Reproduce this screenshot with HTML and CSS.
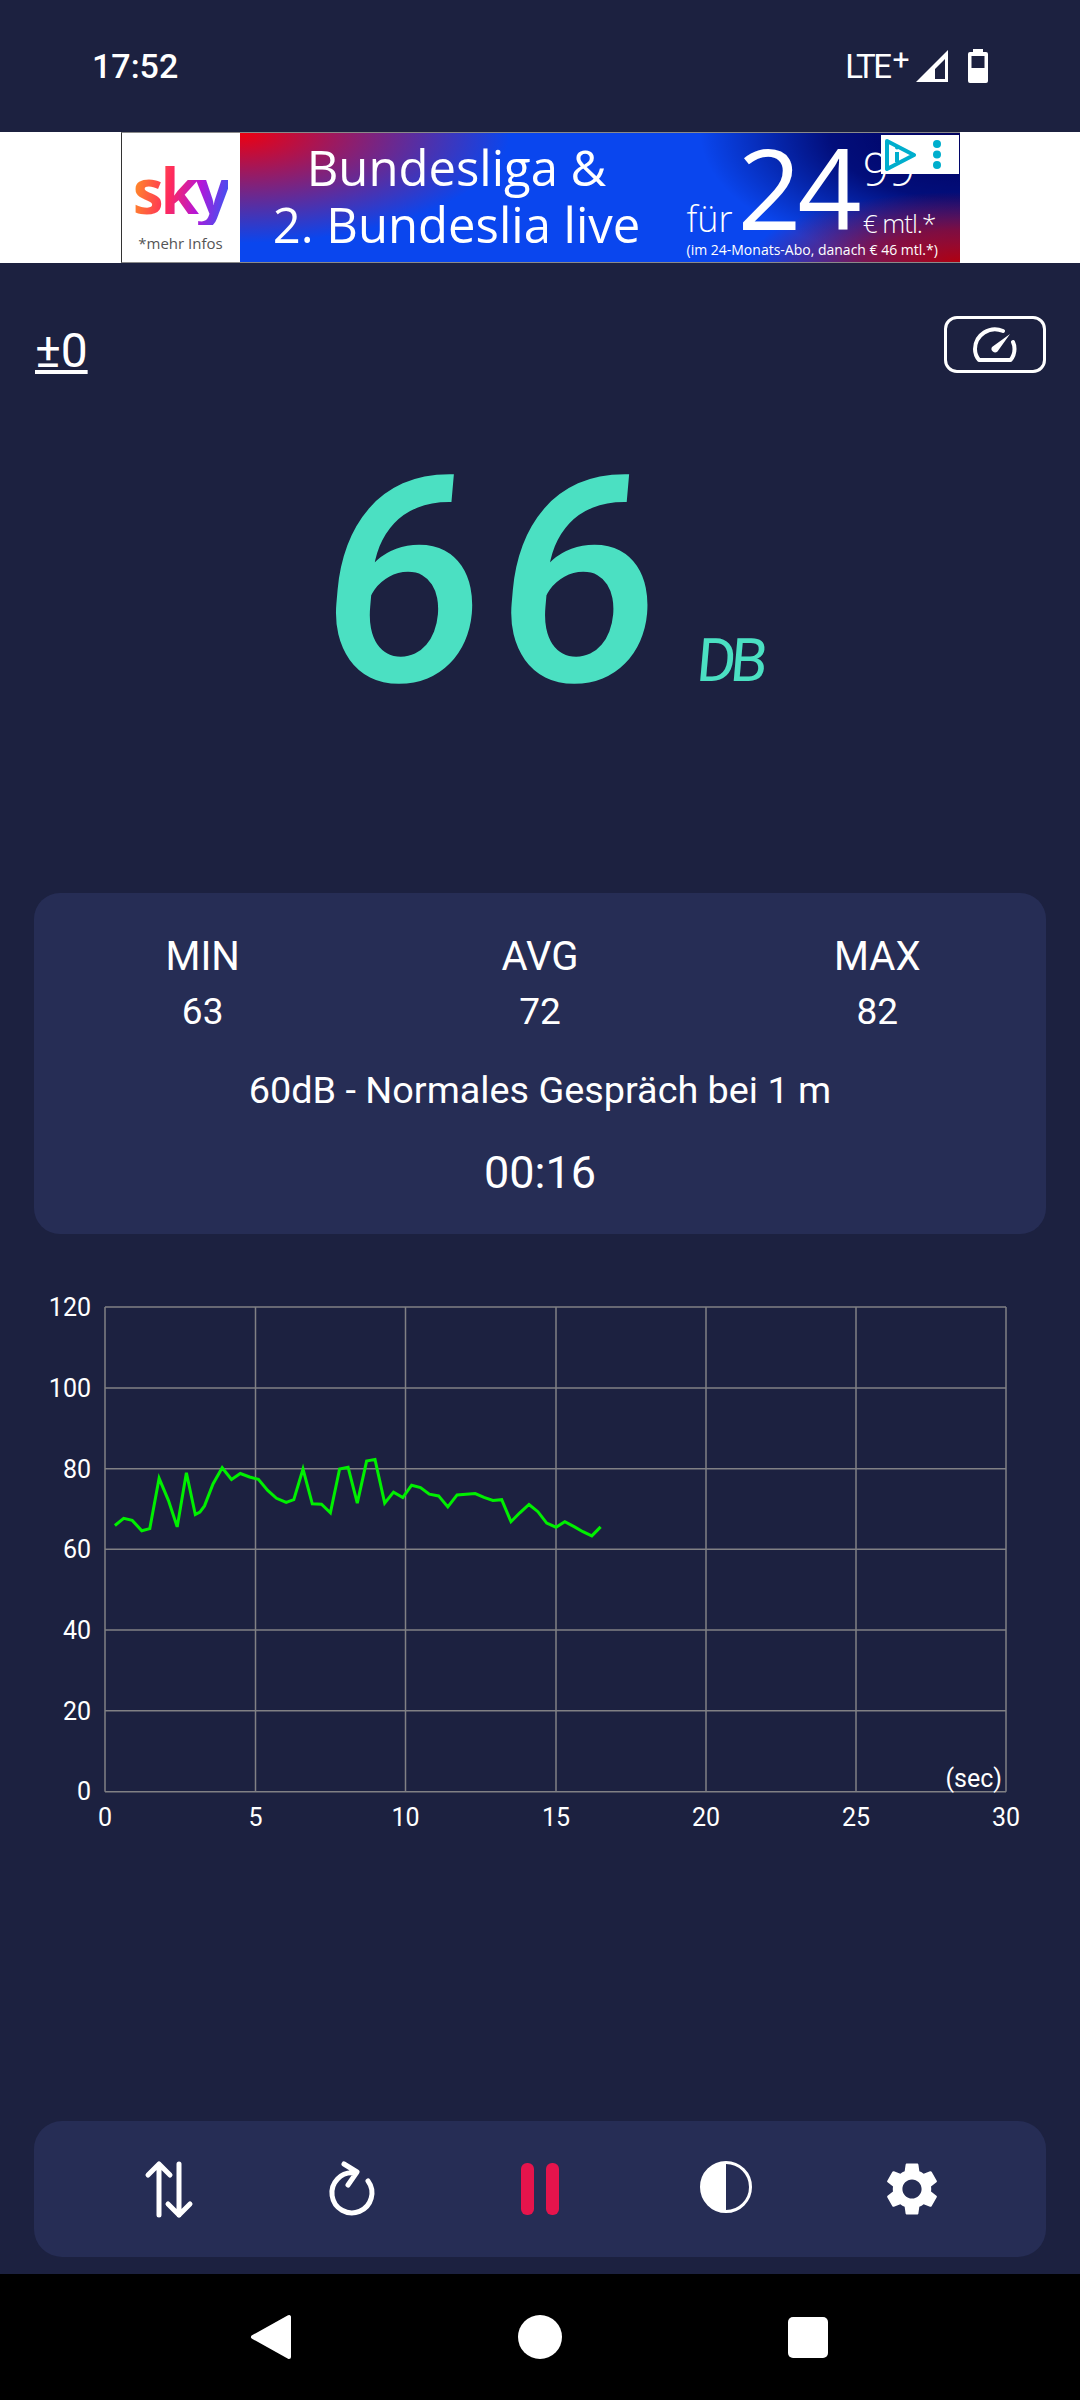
FILE: index.html
```html
<!DOCTYPE html>
<html lang="de">
<head>
    <meta charset="UTF-8">
    <meta name="viewport" content="width=device-width, initial-scale=1.0">
    <title>Sound Meter</title>
    <link rel="stylesheet" href="styles.css">
</head>
<body>
    <header class="status-bar">
        <span class="status-time">17:52</span>
        <div class="status-icons">
            <span class="status-net">LTE<span class="status-plus">+</span></span>
            <svg class="status-signal" width="32" height="32" viewBox="0 0 32 32">
                <path fill-rule="evenodd" fill="#fff" d="M0 32 32 0V32ZM19 29H29V9L19 19Z"/>
            </svg>
            <svg class="status-battery" width="20" height="34" viewBox="0 0 20 34">
                <path fill="#fff" d="M5 0H15V3H18Q20 3 20 5V32Q20 34 18 34H2Q0 34 0 32V5Q0 3 2 3H5Z"/>
                <rect fill="#1c2140" x="3.5" y="7" width="13" height="12"/>
            </svg>
        </div>
    </header>

    <section class="ad-band">
        <div class="ad-creative">
            <div class="ad-logo">
                <span class="ad-sky">sky</span>
                <span class="ad-more">*mehr Infos</span>
            </div>
            <div class="ad-main">
                <div class="ad-headline">
                    <span>Bundesliga &amp;</span>
                    <span>2. Bundeslia live</span>
                </div>
                <div class="ad-offer">
                    <div class="ad-price">
                        <span class="ad-fuer">für</span>
                        <span class="ad-euro">24</span>
                        <div class="ad-side">
                            <span class="ad-cent">99</span>
                            <span class="ad-mtl">€ mtl.*</span>
                        </div>
                    </div>
                    <span class="ad-small">(im 24-Monats-Abo, danach € 46 mtl.*)</span>
                </div>
            </div>
            <div class="ad-choices">
                <svg width="34" height="32" viewBox="0 0 34 32">
                    <path fill="none" stroke="#00aecd" stroke-width="4" stroke-linejoin="round" d="M3 2 30 16 3 30Z"/>
                    <path fill="none" stroke="#00aecd" stroke-width="4" d="M13 13V23"/>
                    <circle fill="#00aecd" cx="13" cy="8.5" r="2"/>
                </svg>
                <svg width="10" height="32" viewBox="0 0 10 32">
                    <circle fill="#00aecd" cx="5" cy="5" r="4"/>
                    <circle fill="#00aecd" cx="5" cy="15.5" r="4"/>
                    <circle fill="#00aecd" cx="5" cy="26" r="4"/>
                </svg>
            </div>
        </div>
    </section>

    <main class="content">
        <div class="top-row">
            <span class="offset">±0</span>
            <button class="gauge-btn" type="button">
                <svg width="44" height="36" viewBox="0 0 44 36">
                    <path fill="none" stroke="#fff" stroke-width="4" stroke-linejoin="round" stroke-linecap="round" d="M30 4A20 20 0 0 0 2 22C2 26 3.5 30 6 33H37.5C40 30 41.5 26 41.5 22 41.5 19 41 17 40 15"/>
                    <path fill="#fff" d="M37 7 24.5 24.5A3.6 3.6 0 0 1 19 20Z"/>
                </svg>
            </button>
        </div>

        <div class="meter">
            <span class="meter-value">66</span>
            <span class="meter-unit">DB</span>
        </div>

        <section class="stats">
            <div class="stats-row">
                <div class="stat">
                    <span class="stat-label">MIN</span>
                    <span class="stat-value">63</span>
                </div>
                <div class="stat">
                    <span class="stat-label">AVG</span>
                    <span class="stat-value">72</span>
                </div>
                <div class="stat">
                    <span class="stat-label">MAX</span>
                    <span class="stat-value">82</span>
                </div>
            </div>
            <p class="stats-hint">60dB - Normales Gespräch bei 1 m</p>
            <p class="stats-time">00:16</p>
        </section>
    </main>

    <svg class="chart" width="1080" height="560" viewBox="0 0 1080 560">
        <g class="chart-grid">
            <path d="M105 17H1006M105 98H1006M105 178.7H1006M105 259.3H1006M105 340H1006M105 420.8H1006M105 501.7H1006"/>
            <path d="M105 17V501.7M255.5 17V501.7M405.5 17V501.7M556 17V501.7M706 17V501.7M856 17V501.7M1006 17V501.7"/>
        </g>
        <polyline class="chart-line" points="114.9,235.5 123.7,228.3 132.2,230.4 141.8,240.7 149.8,238.6 159.1,188.3 168.4,210.4 177.2,236.9 186.4,182.8 195.3,224.5 199.9,222.1 204.5,215.9 213,193.9 222.2,177.7 231.5,189.4 240.3,183.5 249.6,187 258.4,189.4 267.7,200.4 276.5,208.3 286.2,212.5 293.8,209.7 303,179 312.3,213.8 321.5,214.2 330.4,222.8 339.6,179 348.1,177.3 357.3,213.1 366.6,171.1 375,169.4 384.7,213.1 393.5,202.1 402.8,207.6 411.6,195.2 420.5,197.6 429.3,204.2 438.6,205.9 447.8,216.9 457.1,204.9 475.2,203.5 484,207.3 492.9,210.4 501.7,209.7 511,231.7 519.8,222.8 529,214.5 537.9,221.7 546.7,233.1 556,237.2 564.8,231.7 574.1,236.6 582.9,241.7 591.8,245.9 600.6,236.9"/>
        <g class="chart-y">
            <text x="91" y="26">120</text>
            <text x="91" y="107">100</text>
            <text x="91" y="188">80</text>
            <text x="91" y="268">60</text>
            <text x="91" y="349">40</text>
            <text x="91" y="430">20</text>
            <text x="91" y="510">0</text>
        </g>
        <g class="chart-x">
            <text x="105" y="536">0</text>
            <text x="255.5" y="536">5</text>
            <text x="405.5" y="536">10</text>
            <text x="556" y="536">15</text>
            <text x="706" y="536">20</text>
            <text x="856" y="536">25</text>
            <text x="1006" y="536">30</text>
        </g>
        <text class="chart-unit" x="1002" y="497">(sec)</text>
    </svg>

    <div class="toolbar-wrap">
        <nav class="toolbar">
            <button class="tool" type="button">
                <svg width="64" height="60" viewBox="0 0 64 60">
                    <path class="tool-stroke" d="M23 56V5M12 16 23 5 34 16M43 5V56M32 45 43 56 54 45"/>
                </svg>
            </button>
            <button class="tool" type="button">
                <svg width="64" height="60" viewBox="0 0 64 60">
                    <path class="tool-stroke" d="M46 22A20 20 0 1 1 32 14M22 5 35 13 26 26"/>
                </svg>
            </button>
            <button class="tool" type="button">
                <span class="pause-bar"></span>
                <span class="pause-bar"></span>
            </button>
            <button class="tool" type="button">
                <svg width="64" height="60" viewBox="0 0 64 60">
                    <circle cx="32" cy="28" r="24.5" fill="none" stroke="#fff" stroke-width="3"/>
                    <path fill="#fff" d="M32 3A25 25 0 0 0 32 53Z"/>
                </svg>
            </button>
            <button class="tool" type="button">
                <svg width="64" height="64" viewBox="0 0 24 24">
                    <path fill="#fff" d="M19.14 12.94c.04-.3.06-.61.06-.94 0-.32-.02-.64-.07-.94l2.03-1.58c.18-.14.23-.41.12-.61l-1.92-3.32c-.12-.22-.37-.29-.59-.22l-2.39.96c-.5-.38-1.03-.7-1.62-.94l-.36-2.54c-.04-.24-.24-.41-.48-.41h-3.84c-.24 0-.43.17-.47.41l-.36 2.54c-.59.24-1.13.57-1.62.94l-2.39-.96c-.22-.08-.47 0-.59.22L2.74 8.87c-.12.21-.08.47.12.61l2.03 1.58c-.05.3-.09.63-.09.94s.02.64.07.94l-2.03 1.58c-.18.14-.23.41-.12.61l1.92 3.32c.12.22.37.29.59.22l2.39-.96c.5.38 1.03.7 1.62.94l.36 2.54c.05.24.24.41.48.41h3.84c.24 0 .44-.17.47-.41l.36-2.54c.59-.24 1.13-.56 1.62-.94l2.39.96c.22.08.47 0 .59-.22l1.92-3.32c.12-.22.07-.47-.12-.61l-2.01-1.58zM12 15.6c-1.98 0-3.6-1.62-3.6-3.6s1.62-3.6 3.6-3.6 3.6 1.62 3.6 3.6-1.62 3.6-3.6 3.6z"/>
                </svg>
            </button>
        </nav>
    </div>

    <footer class="nav-bar">
        <svg width="44" height="46" viewBox="0 0 44 46">
            <path fill="#fff" stroke="#fff" stroke-width="4" stroke-linejoin="round" d="M39 3V43L3 23Z"/>
        </svg>
        <span class="nav-home"></span>
        <span class="nav-recent"></span>
    </footer>
</body>
</html>
```

FILE: styles.css
```css
body, h1, h2, p, ul, li {
    margin: 0;
    padding: 0;
}

body {
    width: 1080px;
    height: 2400px;
    display: flex;
    flex-direction: column;
    overflow: hidden;
    font-family: Roboto, sans-serif;
    color: #fff;
    background-color: #1c2140;
}

/* status bar */
.status-bar {
    height: 132px;
    display: flex;
    justify-content: space-between;
    align-items: center;
    padding: 0 92px;
    box-sizing: border-box;
}

.status-time {
    font-size: 34px;
    font-weight: 500;
}

.status-icons {
    display: flex;
    align-items: center;
    gap: 20px;
}

.status-net {
    font-size: 33px;
    letter-spacing: -2.5px;
    margin-right: -11px;
}

.status-plus {
    font-size: 30px;
    position: relative;
    top: -8px;
    margin-left: 3px;
}

/* ad banner */
.ad-band {
    height: 131px;
    background-color: #fff;
    display: flex;
    justify-content: center;
}

.ad-creative {
    width: 839px;
    display: flex;
    position: relative;
    border-left: 1px solid #333;
    border-top: 1px solid #8a8a8a;
    border-bottom: 1px solid #8a8a8a;
    box-sizing: border-box;
    font-family: "Open Sans", sans-serif;
}

.ad-logo {
    width: 118px;
    display: flex;
    flex-direction: column;
    align-items: center;
    background-color: #fff;
}

.ad-sky {
    font-size: 62px;
    font-weight: 700;
    line-height: 70px;
    letter-spacing: -3px;
    margin-top: 22px;
    background: linear-gradient(100deg, #ff9a1f 0%, #ff2a5c 40%, #b516d8 68%, #2f5bf5 100%);
    -webkit-background-clip: text;
    background-clip: text;
    color: transparent;
}

.ad-more {
    font-size: 15px;
    color: #555;
    margin-top: 8px;
}

.ad-main {
    flex: 1;
    display: flex;
    color: #fff;
    background:
        radial-gradient(ellipse 270px 110px at 0 0, #ee0010 0%, rgba(238, 0, 16, 0.55) 45%, rgba(238, 0, 16, 0) 100%),
        radial-gradient(ellipse 210px 70px at 100% 100%, #b00010 0%, rgba(176, 0, 16, 0.7) 45%, rgba(176, 0, 16, 0) 100%),
        radial-gradient(ellipse 260px 130px at 100% 0, #00005e 0%, rgba(0, 0, 94, 0.8) 50%, rgba(0, 0, 94, 0) 100%),
        #0a46ee;
}

.ad-headline {
    width: 434px;
    display: flex;
    flex-direction: column;
    align-items: center;
    font-size: 49px;
    font-weight: 500;
    line-height: 57px;
    padding-top: 6px;
}

.ad-offer {
    display: flex;
    flex-direction: column;
    margin-left: 13px;
}

.ad-price {
    display: flex;
    align-items: flex-end;
    height: 108px;
    gap: 5px;
}

.ad-fuer {
    font-size: 36px;
    font-weight: 300;
    line-height: 44px;
}

.ad-euro {
    font-size: 112px;
    line-height: 108px;
    letter-spacing: -4px;
}

.ad-side {
    display: flex;
    flex-direction: column;
    justify-content: space-between;
    height: 96px;
}

.ad-cent {
    font-size: 46px;
    font-weight: 300;
    line-height: 46px;
}

.ad-mtl {
    font-size: 26px;
    font-weight: 300;
    line-height: 36px;
    white-space: nowrap;
    letter-spacing: -1px;
}

.ad-small {
    font-size: 14px;
    line-height: 16px;
    white-space: nowrap;
    margin-top: 1px;
}

.ad-choices {
    position: absolute;
    top: 2px;
    right: 1px;
    width: 78px;
    height: 39px;
    box-sizing: border-box;
    background-color: #fff;
    display: flex;
    align-items: center;
    justify-content: space-between;
    padding: 0 17px 0 3px;
}

/* top content */
.content {
    padding: 0 34px;
}

.top-row {
    display: flex;
    justify-content: space-between;
    margin-top: 53px;
    height: 57px;
}

.offset {
    font-size: 48px;
    text-decoration: underline;
    line-height: 50px;
    margin-top: 10px;
    margin-left: 1px;
}

.gauge-btn {
    width: 102px;
    height: 57px;
    padding: 0;
    display: flex;
    align-items: center;
    justify-content: center;
    background: none;
    border: 3px solid #fff;
    border-radius: 13px;
}

/* no seven-segment font is installed, so the reading stays real Roboto text */
.meter {
    height: 217px;
    margin-top: 101px;
    padding-left: 288px;
    display: flex;
    align-items: baseline;
    color: #4be0c2;
}

.meter-value {
    font-size: 289px;
    font-weight: 500;
    line-height: 217px;
    letter-spacing: 11px;
    transform: skewX(-5deg);
}

.meter-unit {
    font-size: 60px;
    line-height: 60px;
    margin-left: 24px;
    letter-spacing: -6px;
    transform: skewX(-5deg);
}

/* stats card */
.stats {
    height: 341px;
    margin-top: 202px;
    box-sizing: border-box;
    padding-top: 37px;
    border-radius: 26px;
    background-color: #262d55;
    text-align: center;
}

.stats-row {
    display: grid;
    grid-template-columns: repeat(3, 1fr);
}

.stat {
    display: flex;
    flex-direction: column;
}

.stat-label {
    font-size: 40px;
    line-height: 54px;
}

.stat-value {
    font-size: 37px;
    line-height: 55px;
}

.stats-hint {
    font-size: 37.8px;
    line-height: 54px;
    margin-top: 24px;
}

.stats-time {
    font-size: 45px;
    line-height: 60px;
    margin-top: 26px;
}

/* chart */
.chart {
    display: block;
    flex: none;
    margin-top: 56px;
}

.chart-grid path {
    fill: none;
    stroke: #808084;
    stroke-width: 1.5;
}

.chart-line {
    fill: none;
    stroke: #00f000;
    stroke-width: 3;
}

.chart text {
    font-family: Roboto, sans-serif;
    font-size: 25px;
    fill: #fff;
}

.chart-y text {
    text-anchor: end;
}

.chart-x text {
    text-anchor: middle;
}

.chart .chart-unit {
    text-anchor: end;
}

/* bottom toolbar */
.toolbar-wrap {
    margin-top: auto;
    padding: 0 34px 17px;
}

.toolbar {
    height: 136px;
    display: flex;
    justify-content: center;
    border-radius: 28px;
    background-color: #262d55;
}

.tool {
    width: 186px;
    padding: 0;
    display: flex;
    align-items: center;
    justify-content: center;
    gap: 12px;
    background: none;
    border: none;
}

.tool-stroke {
    fill: none;
    stroke: #fff;
    stroke-width: 5;
    stroke-linecap: round;
    stroke-linejoin: round;
}

.pause-bar {
    width: 13px;
    height: 52px;
    border-radius: 6px;
    background-color: #e6144c;
}

/* android nav */
.nav-bar {
    height: 126px;
    flex: none;
    display: grid;
    grid-template-columns: 268px 268px 268px;
    justify-content: center;
    justify-items: center;
    align-items: center;
    background-color: #000;
}

.nav-home {
    width: 44px;
    height: 44px;
    border-radius: 50%;
    background-color: #fff;
}

.nav-recent {
    width: 40px;
    height: 41px;
    border-radius: 5px;
    background-color: #fff;
}
```
